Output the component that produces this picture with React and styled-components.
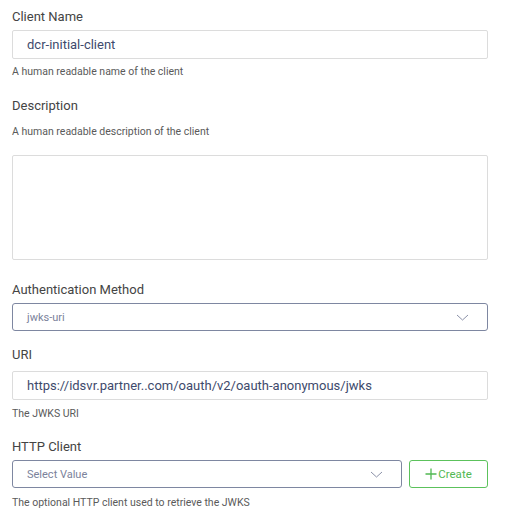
import React from 'react';
import styled, {createGlobalStyle} from "styled-components";

const GlobalStyle = createGlobalStyle`
  body {
    margin: 0;
    background: #ffffff;
    font-family: Roboto, "Liberation Sans", sans-serif;
  }
`;

const Form = styled.div`
  width: 476px;
  padding: 8px 12px 0 12px;
`;

const Field = styled.div`
  margin-bottom: ${props => props.gap || 18}px;
`;

const Label = styled.div`
  font-size: 13px;
  line-height: 18px;
  color: #444;
  margin-bottom: ${props => props.gap || 5}px;
`;

const Hint = styled.div`
  font-size: 10.5px;
  line-height: 14px;
  color: #5a5a5a;
  margin-top: ${props => props.top || 6}px;
  margin-bottom: ${props => props.bottom || 0}px;
`;

const TextInput = styled.div`
  box-sizing: border-box;
  height: 29px;
  border: 1px solid #dcdcdc;
  border-radius: 2px;
  padding: 0 14px;
  display: flex;
  align-items: center;
  font-size: 13px;
  color: #3e4a6c;
`;

const TextArea = styled.div`
  box-sizing: border-box;
  height: 105px;
  border: 1px solid #dcdcdc;
  border-radius: 2px;
`;

const Row = styled.div`
  display: flex;
  gap: 7px;
`;

const Select = styled.div`
  box-sizing: border-box;
  flex: 1;
  height: 28px;
  border: 1px solid #7e87a1;
  border-radius: 3px;
  padding: 0 18px 0 14px;
  display: flex;
  align-items: center;
  justify-content: space-between;
  font-size: 11px;
  color: #7b829b;
`;

const CreateButton = styled.button`
  box-sizing: border-box;
  width: 79px;
  height: 28px;
  border: 1px solid #5cc25c;
  border-radius: 3px;
  background: #fff;
  color: #52b852;
  font-family: Roboto, "Liberation Sans", sans-serif;
  font-size: 11.5px;
  display: flex;
  align-items: center;
  justify-content: center;
  gap: 1px;
  padding: 0;
  cursor: pointer;
`;

const Chevron = () => (
    <svg width="13" height="7" viewBox="0 0 13 7">
        <path d="M1 1 L6.5 6 L12 1" fill="none" stroke="#8b91a8" strokeWidth="1"/>
    </svg>
);

const Plus = () => (
    <svg width="12" height="12" viewBox="0 0 12 12">
        <path d="M6 0.5 V11.5 M0.5 6 H11.5" stroke="#52b852" strokeWidth="1.3"/>
    </svg>
);

const App = () => {
    return (
        <Form>
            <GlobalStyle/>
            <Field>
                <Label gap={4}>Client Name</Label>
                <TextInput>dcr-initial-client</TextInput>
                <Hint>A human readable name of the client</Hint>
            </Field>
            <Field gap={21}>
                <Label>Description</Label>
                <Hint top={10} bottom={16}>A human readable description of the client</Hint>
                <TextArea/>
            </Field>
            <Field gap={15}>
                <Label gap={4}>Authentication Method</Label>
                <Select>jwks-uri<Chevron/></Select>
            </Field>
            <Field gap={17}>
                <Label gap={7}>URI</Label>
                <TextInput>https://idsvr.partner..com/oauth/v2/oauth-anonymous/jwks</TextInput>
                <Hint top={7}>The JWKS URI</Hint>
            </Field>
            <Field>
                <Label gap={4}>HTTP Client</Label>
                <Row>
                    <Select>Select Value<Chevron/></Select>
                    <CreateButton><Plus/>Create</CreateButton>
                </Row>
                <Hint top={8}>The optional HTTP client used to retrieve the JWKS</Hint>
            </Field>
        </Form>
    );
};

export default App;
